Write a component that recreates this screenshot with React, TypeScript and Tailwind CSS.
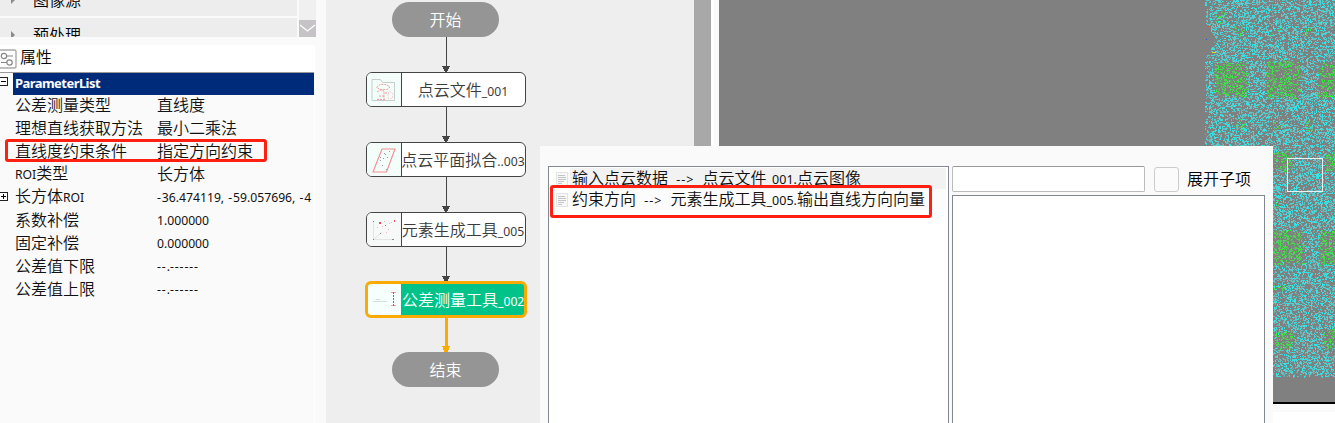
import React from "react";

const FONT = "font-['Noto_Sans','Noto_Sans_CJK_SC',sans-serif]";

/** Sets ideographs at the surrounding size, Latin runs slightly smaller, dashes a little wider. */
function Mixed({ text, latin = "text-[12.2px]" }: { text: string; latin?: string }) {
  const parts = text.match(/[\u4e00-\u9fff]+|[-\s>]+|[^\u4e00-\u9fff\s>-]+/g) ?? [];
  return (
    <>
      {parts.map((p, i) => {
        if (/[\u4e00-\u9fff]/.test(p)) {
          return (
            <span key={i} className="font-['Noto_Sans_CJK_SC',sans-serif] font-[350]">
              {p}
            </span>
          );
        }
        return (
          <span key={i} className={/[-\s]/.test(p) ? `${latin} tracking-[0.9px]` : latin}>
            {p}
          </span>
        );
      })}
    </>
  );
}

const ROWS: { name: string; value: string; expand?: boolean }[] = [
  { name: "公差测量类型", value: "直线度" },
  { name: "理想直线获取方法", value: "最小二乘法" },
  { name: "直线度约束条件", value: "指定方向约束" },
  { name: "ROI类型", value: "长方体" },
  { name: "长方体ROI", value: "-36.474119, -59.057696, -4", expand: true },
  { name: "系数补偿", value: "1.000000" },
  { name: "固定补偿", value: "0.000000" },
  { name: "公差值下限", value: "--.------" },
  { name: "公差值上限", value: "--.------" },
];

function Expander({ open }: { open: boolean }) {
  return (
    <svg width="9" height="9" viewBox="0 0 9 9" className="-ml-px shrink-0" shapeRendering="crispEdges">
      <path d="M.5 .5h8v8h-8z" fill="#fff" stroke="#222" />
      <path d={open ? "M2 4.5h5" : "M2 4.5h5M4.5 2v5"} stroke="#000" />
    </svg>
  );
}

function TreeRow({ label, className }: { label: string; className: string }) {
  return (
    <div className={`flex w-[297px] shrink-0 overflow-hidden bg-[#ededed] ${className}`}>
      <svg width="6" height="8" viewBox="0 0 6 8" className="mt-[10px] ml-[11px] shrink-0">
        <path d="M0 0l4 4-4 4z" fill="#8a8a8a" />
      </svg>
      <span className="ml-[16px] text-[16px] leading-[26px] text-black">
        <Mixed text={label} />
      </span>
    </div>
  );
}

function Sidebar() {
  return (
    <div className="relative flex h-full w-[326px] shrink-0 flex-col bg-[#fafafa]">
      <div className="flex h-[37px] shrink-0 overflow-hidden">
        <div className="flex w-[299px] flex-col gap-[2px] bg-[#fafafa]">
          <div className="flex h-[16px] shrink-0 flex-col justify-end overflow-hidden">
            <TreeRow label="图像源" className="h-[30px]" />
          </div>
          <TreeRow label="预处理" className="h-[19px] pt-[3px]" />
        </div>
        <div className="flex w-[17px] flex-col justify-end bg-[#f0f0f0]">
          <div className="flex h-[17px] items-center justify-center bg-[#c6c3c6]">
            <svg width="17" height="17" viewBox="0 0 17 17" fill="none">
              <path d="M1 5l7.500 6L16 5" stroke="#fff" strokeWidth="1.300" />
            </svg>
          </div>
        </div>
      </div>
      <div className="mt-[8px] flex h-[27px] w-[315px] shrink-0 items-center bg-white">
        <svg width="17" height="20" viewBox="0 0 17 20" fill="none" className="shrink-0">
          <path d="M0 1h14.500q1.500 0 1.500 1.500v15q0 1.500-1.500 1.500H0" stroke="#aaa" strokeWidth="1.400" />
          <g stroke="#858585" strokeWidth="1.200">
            <circle cx="4" cy="7" r="2.700" />
            <path d="M6.700 7H13M1 13.500h6" />
            <circle cx="9.500" cy="13.500" r="2.700" />
          </g>
        </svg>
        <span className="ml-[3px] pb-[5px] text-[16px] leading-[22px] text-black">
          <Mixed text="属性" />
        </span>
      </div>
      <div className="flex h-[23px] w-[314px] shrink-0 border-t border-[#999]">
        <div className="flex w-[13px] shrink-0 items-start pt-[4px]">
          <Expander open />
        </div>
        <div className="grow bg-[#002a7a] pl-[2px] text-[13px] leading-[20px] font-bold tracking-[-0.55px] text-white">
          ParameterList
        </div>
      </div>
      <div className="flex w-[315px] grow flex-col border-r border-white">
        {ROWS.map((r) => (
          <div key={r.name} className="flex h-[23px] shrink-0 items-center pb-[4px] text-[16px] leading-[19px] text-[#111]">
            <div className="w-[15px] shrink-0">{r.expand && <Expander open={false} />}</div>
            <div className="w-[142px] shrink-0 whitespace-nowrap">
              <Mixed text={r.name} />
            </div>
            <div className="whitespace-pre">
              <Mixed text={r.value} />
            </div>
          </div>
        ))}
      </div>
      <div className="absolute top-[139px] left-[5px] h-[23px] w-[262px] rounded-[3px] border-3 border-[#ff2012]" />
    </div>
  );
}

function Arrow({ active = false }: { active?: boolean }) {
  return (
    <svg width="10" height="35" viewBox="0 0 10 35" className="shrink-0" shapeRendering="crispEdges">
      {active ? (
        <>
          <path d="M4 0h3v35H4z" fill="#fbab00" />
          <path d="M1 29h8l-2.500 6h-3z" fill="#fbab00" />
        </>
      ) : (
        <>
          <path d="M5 0h1v35H5z" fill="#444" />
          <path d="M1 29h8l-3 6H4z" fill="#444" />
        </>
      )}
    </svg>
  );
}

function Pill({ label }: { label: string }) {
  return (
    <div className="mr-px flex h-[35px] w-[107px] shrink-0 items-center justify-center rounded-full bg-[#959595] pb-px text-[16px] text-white">
      <span className="leading-[24px]">
        <Mixed text={label} />
      </span>
    </div>
  );
}

function Node({ label, icon, tint }: { label: string; icon: React.ReactNode; tint: string }) {
  return (
    <div className="flex h-[35px] w-[160px] shrink-0 overflow-hidden rounded-[6px] border border-[#444] bg-white">
      <div className={`flex w-[35px] shrink-0 items-center justify-center border-r border-[#444] ${tint}`}>{icon}</div>
      <div className="-ml-px flex grow items-center justify-center pt-[2px] text-[16px] whitespace-nowrap text-[#3c3c3c]">
        <span className="leading-[31px]">
          <Mixed text={label} />
        </span>
      </div>
    </div>
  );
}

const FolderIcon = (
  <svg width="26" height="26" viewBox="0 0 26 26" fill="none">
    <path d="M1 2.500h8.500l2 3H23.500v18H1z" stroke="#c6cfcd" />
    <g stroke="#f29a9a" strokeDasharray="2 1">
      <path d="M5.500 10.500L9 7.500h6l4 2.500-3 2.500H9z" />
      <path d="M6 15l4-2 3 1v10M6 22.500h8M8 19h5M14 16h4" />
    </g>
    <path d="M18.500 14.500q4 1 3.500 4.500t-4.500 3q-1-3 0-6" stroke="#f9caca" strokeDasharray="2 1" />
  </svg>
);

const PlaneIcon = (
  <svg width="26" height="28" viewBox="0 0 26 28" fill="none">
    <path d="M11 3h13L15.500 26H2z" stroke="#f48c92" strokeWidth="1.100" />
    <g fill="#999">
      {[[13, 7], [18, 5], [9, 11], [12, 12], [16, 11], [9, 14], [11, 19], [15, 23], [14, 8]].map(([x, y]) => (
        <rect key={`${x}-${y}`} x={x} y={y} width="1" height="1" />
      ))}
    </g>
  </svg>
);

const ScatterIcon = (
  <svg width="26" height="26" viewBox="0 0 26 26" fill="none">
    <path d="M2.500 5v17.500H22M3 22l8-7" stroke="#e4e4e4" strokeWidth="1" />
    <g fill="#888">
      <path d="M2 4h1v1H2zM21 22h2v1h-2zM2 22h1v1H2zM9 16h1v1H9z" />
    </g>
    <g fill="#e84a5a">
      <path d="M8 5h2v2H8zM23 3h1v2h-1zM14 8h1v1h-1z" />
    </g>
    <g fill="#f9b5bb">
      <path d="M13 4h1v1h-1zM18 6h1v1h-1zM6 10h1v1H6zM11 9h1v1h-1zM17 12h1v1h-1zM15 15h1v1h-1zM20 5h1v1h-1z" />
    </g>
  </svg>
);

const ToleranceIcon = (
  <svg width="28" height="20" viewBox="0 0 28 20" fill="none" shapeRendering="crispEdges">
    <path d="M2 11.500h14M5 9.500h4" stroke="#d4dedb" />
    <path d="M20 2.500h5M20 15.500h5" stroke="#f0a0a4" />
    <path d="M22.500 2v14" stroke="#dc4c58" strokeDasharray="2 1" />
  </svg>
);

function FlowPanel() {
  return (
    <div className="flex h-full w-[393px] shrink-0">
      <div className="flex w-[368px] shrink-0 justify-start bg-[#eee] pl-[39px]">
        <div className="flex w-[162px] flex-col items-center pt-[2px]">
          <Pill label="开始" />
          <Arrow />
          <Node label="点云文件_001" icon={FolderIcon} tint="bg-[#f3fefb]" />
          <Arrow />
          <Node label="点云平面拟合..003" icon={PlaneIcon} tint="bg-[#f3fefb]" />
          <Arrow />
          <Node label="元素生成工具_005" icon={ScatterIcon} tint="bg-[#f7f8f8]" />
          <Arrow />
          <div className="-my-px flex h-[37px] w-[162px] shrink-0 overflow-hidden rounded-[6px] border-3 border-[#fbab00] bg-[#00c389]">
            <div className="flex w-[33px] shrink-0 items-center justify-center bg-[#f5fffc]">{ToleranceIcon}</div>
            <div className="flex grow items-center pt-[2px] pl-px text-[16px] leading-[29px] whitespace-nowrap text-white">
              <span>
                <Mixed text="公差测量工具_002" />
              </span>
            </div>
          </div>
          <Arrow active />
          <Pill label="结束" />
        </div>
      </div>
      <div className="w-[17px] bg-[#a8a8a8]" />
      <div className="w-[3px] bg-white" />
      <div className="w-[5px] bg-[#fafafa]" />
    </div>
  );
}

// Green clusters in the scan: left, top, width, height, probability of green.
const PATCHES = [
  [9, 62, 32, 34, 0.97], [61, 61, 33, 36, 0.97], [113, 62, 30, 34, 0.97],
  [64, 152, 22, 18, 0.85], [120, 152, 20, 18, 0.85],
  [60, 230, 38, 34, 0.97], [114, 230, 30, 34, 0.97],
  [64, 331, 24, 16, 0.9], [118, 330, 20, 18, 0.9],
  [28, 26, 11, 10, 0.45], [64, 26, 10, 10, 0.45], [99, 26, 10, 10, 0.45],
  [28, 119, 11, 9, 0.45], [65, 120, 10, 9, 0.45], [99, 121, 10, 8, 0.5],
  [8, 10, 14, 12, 0.25], [66, 198, 8, 8, 0.5], [68, 284, 10, 8, 0.4],
];
const CYANS = ["#24ecec", "#48d6d9", "#58c8cb", "#68b4b6"];
const GREENS = ["#2cf034", "#40e04a", "#4cd058", "#5cb062"];

function scan(): Record<string, string> {
  let s = 20240611;
  const rnd = () => {
    s = (s + 0x6d2b79f5) | 0;
    let t = Math.imul(s ^ (s >>> 15), 1 | s);
    t = (t + Math.imul(t ^ (t >>> 7), 61 | t)) ^ t;
    return ((t ^ (t >>> 14)) >>> 0) / 4294967296;
  };
  const out: Record<string, string> = {};
  for (let y = 0; y < 377; y++) {
    for (let x = y < 146 ? 0 : 68; x < 130; x++) {
      const notch = y > 24 && y < 54 ? 10 - Math.abs(y - 39) * 0.45 : 0;
      const density = x < 4 ? 0.19 : 0.31;
      if (x < notch || rnd() > density) continue;
      const jx = x + (rnd() - 0.5) * 4;
      const jy = y + (rnd() - 0.5) * 4;
      const p = PATCHES.find(([l, t, w, h]) => jx >= l && jx < l + w && jy >= t && jy < t + h);
      const palette = p && rnd() < p[4] ? GREENS : CYANS;
      const c = palette[Math.floor(rnd() * 4)];
      const shape = rnd();
      const w = shape < 0.4 ? 2 : 1;
      const h = shape > 0.8 ? 2 : 1;
      out[c] = (out[c] ?? "") + `M${x} ${y}h${w}v${h}h-${w}z`;
    }
  }
  return out;
}
const CLOUD = scan();

function Viewer() {
  return (
    <div className="flex h-full grow flex-col bg-white">
      <div className="flex h-[402px] shrink-0 justify-end bg-[#808080]">
        <svg width="130" height="402" viewBox="0 0 130 402" shapeRendering="crispEdges">
          {Object.entries(CLOUD).map(([c, d]) => (
            <path key={c} d={d} fill={c} />
          ))}
          <path d="M2 26h3v1H2z" fill="#ff4a10" />
          <path d="M10 46h1v5h-1z" fill="#f05a20" />
          <path d="M7 52h4v1H7z" fill="#d8e020" />
          <path d="M1 39h1v1H1z" fill="#3050f0" />
          <rect x="82.500" y="158.500" width="35" height="33" fill="none" stroke="#e8f4f4" />
        </svg>
      </div>
      <div className="h-[2px] shrink-0 bg-black" />
      <div className="h-[8px] shrink-0 bg-[#fafafa]" />
    </div>
  );
}

function DocIcon() {
  return (
    <svg width="12" height="14" viewBox="0 0 12 14" className="shrink-0" shapeRendering="crispEdges">
      <path d="M.5 .5h11v13H.5z" fill="#f8f8f8" stroke="#e4e4e4" />
      <path d="M2 3.500h7M2 5.500h8M2 7.500h8M2 9.500h6M2 11.500h4" stroke="#c4c4c4" />
    </svg>
  );
}

function Dialog() {
  return (
    <div className="absolute top-[146px] left-[540px] flex h-[277px] w-[733px] gap-[3px] bg-[#fafafa] pt-[20px] pl-[8px]">
      <div className="relative flex w-[401px] shrink-0 flex-col border border-b-0 border-[#828790] bg-white pt-[1px] pr-[2px] pl-[7px]">
        {["输入点云数据  -->  点云文件_001.点云图像", "约束方向  -->  元素生成工具_005.输出直线方向向量"].map((t, i) => (
          <div key={t} className="flex h-[21px] shrink-0 items-center">
            <DocIcon />
            <div className={`ml-[2px] flex h-full grow items-center pl-[2px] text-[16px] whitespace-pre text-[#111] ${i === 0 ? "bg-[#f2f2f2]" : "bg-[#fcfcfc]"}`}>
              <span className="leading-[19px]">
                <Mixed text={t} latin="text-[12.5px]" />
              </span>
            </div>
          </div>
        ))}
        <div className="absolute top-[18px] left-[1px] h-[33px] w-[382px] rounded-[3px] border-3 border-[#ff2012]" />
      </div>
      <div className="flex w-[313px] shrink-0 flex-col gap-[3px]">
        <div className="flex h-[26px] shrink-0 items-center">
          <div className="h-full w-[193px] rounded-[2px] border border-[#bbb] border-t-[#999] bg-white" />
          <div className="ml-[9px] h-[25px] w-[25px] rounded-[3px] border border-[#ccc] bg-[#fbfbfb]" />
          <span className="ml-[8px] pb-px text-[16px] leading-[24px] text-black">
            <Mixed text="展开子项" />
          </span>
        </div>
        <div className="grow border border-b-0 border-[#828790] bg-white" />
      </div>
    </div>
  );
}

export default function App() {
  return (
    <div className={`relative flex h-[423px] w-[1335px] overflow-hidden bg-[#fafafa] ${FONT}`}>
      <Sidebar />
      <FlowPanel />
      <Viewer />
      <Dialog />
    </div>
  );
}
